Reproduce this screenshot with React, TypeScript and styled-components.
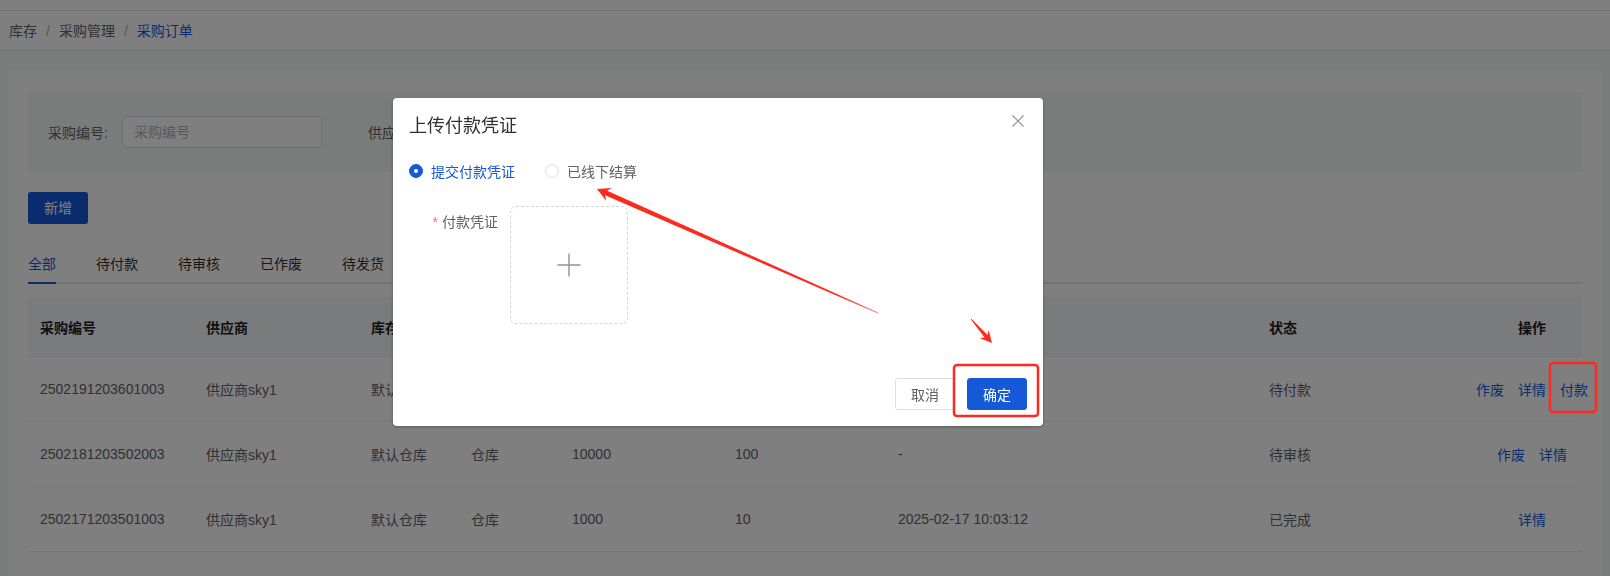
import styled, { createGlobalStyle } from 'styled-components';

const GlobalStyle = createGlobalStyle`
  * {
    box-sizing: border-box;
  }
  html,
  body {
    margin: 0;
    padding: 0;
    overflow: hidden;
  }
  body {
    font-family: 'Liberation Sans', 'Noto Sans CJK SC', sans-serif;
    font-size: 14px;
    color: #606266;
    background: #f5f6f7;
  }
`;

const BLUE = '#1659d8';

const Page = styled.div`
  width: 1610px;
  height: 576px;
  display: flex;
  flex-direction: column;
`;

const TopStrip = styled.div`
  height: 11px;
  background: #fff;
  border-bottom: 1px solid #e4e7ed;
`;

const Breadcrumb = styled.nav`
  height: 40px;
  padding: 0 9px;
  display: flex;
  align-items: center;
  background: #fff;
  border-bottom: 1px solid #e4e7ed;
  line-height: 20px;
`;

const Crumb = styled.span<{ $current?: boolean }>`
  color: ${(p) => (p.$current ? BLUE : '#606266')};
`;

const Sep = styled.span`
  margin: 0 9px;
  color: #a8abb2;
`;

const Main = styled.main`
  flex: 1;
  padding: 20px 8px 0;
  overflow: hidden;
`;

const Card = styled.section`
  background: #fff;
  padding: 21px 20px 0;
  height: 100%;
`;

const FilterBar = styled.div`
  height: 80px;
  padding: 0 20px;
  display: flex;
  align-items: center;
  gap: 46px;
  background: #f5f6f7;
`;

const Field = styled.label`
  display: flex;
  align-items: center;
  gap: 14px;
  color: #606266;
`;

const Input = styled.input`
  width: 200px;
  height: 32px;
  padding: 0 11px;
  border: 1px solid #dcdfe6;
  border-radius: 4px;
  font: inherit;
  color: #606266;
  outline: none;
  &::placeholder {
    color: #b0b3ba;
  }
`;

const PrimaryButton = styled.button`
  height: 32px;
  padding: 0 16px;
  border: none;
  border-radius: 3px;
  background: ${BLUE};
  color: #fff;
  font: inherit;
  line-height: 32px;
`;

const Toolbar = styled.div`
  margin-top: 20px;
`;

const Tabs = styled.div`
  margin-top: 20px;
  display: flex;
  gap: 40px;
  border-bottom: 2px solid #e4e7ed;
`;

const Tab = styled.div<{ $active?: boolean }>`
  height: 40px;
  padding-top: 2px;
  line-height: 36px;
  margin-bottom: -2px;
  border-bottom: 2px solid ${(p) => (p.$active ? BLUE : 'transparent')};
  color: ${(p) => (p.$active ? BLUE : '#303133')};
`;

const Table = styled.div`
  margin-top: 13px;
`;

const COLS = '166px 165px 100px 101px 163px 163px 371px 225px 100px';

const HeadRow = styled.div`
  display: grid;
  grid-template-columns: ${COLS};
  height: 60px;
  align-items: center;
  background: #f5f6f8;
  border-bottom: 1px solid #ebeef5;
`;

const HeadCell = styled.div<{ $center?: boolean }>`
  padding: 0 12px;
  font-weight: 700;
  color: #1d1f24;
  text-align: ${(p) => (p.$center ? 'center' : 'left')};
`;

const Row = styled.div`
  display: grid;
  grid-template-columns: ${COLS};
  height: 65px;
  align-items: center;
  border-bottom: 1px solid #ebeef5;
`;

const Cell = styled.div`
  padding: 0 12px;
  color: #606266;
  white-space: nowrap;
`;

const Actions = styled.div`
  display: flex;
  justify-content: center;
  gap: 14px;
  white-space: nowrap;
`;

const LinkButton = styled.span`
  flex-shrink: 0;
  color: ${BLUE};
`;

/* dialog */

const Mask = styled.div`
  position: fixed;
  inset: 0;
  background: rgba(0, 0, 0, 0.5);
  padding: 98px 0 0 393px;
`;

const Dialog = styled.div`
  width: 650px;
  background: #fff;
  border-radius: 4px;
  box-shadow: 0 1px 3px rgba(0, 0, 0, 0.3);
`;

const DialogHeader = styled.header`
  padding: 16px 16px 0;
  display: flex;
  justify-content: space-between;
  align-items: flex-start;
`;

const DialogTitle = styled.h3`
  margin: 0;
  font-size: 18px;
  font-weight: 400;
  line-height: 24px;
  color: #303133;
`;

const CloseButton = styled.span`
  display: flex;
  margin: 1px 3px 0 0;
`;

const DialogBody = styled.div`
  padding: 23px 16px 0;
`;

const RadioGroup = styled.div`
  display: flex;
  height: 20px;
  align-items: center;
  gap: 30px;
`;

const Radio = styled.label<{ $checked?: boolean }>`
  display: flex;
  align-items: center;
  gap: 8px;
  color: ${(p) => (p.$checked ? BLUE : '#606266')};
`;

const RadioDot = styled.span<{ $checked?: boolean }>`
  width: 14px;
  height: 14px;
  border-radius: 50%;
  border: 1px solid ${(p) => (p.$checked ? BLUE : '#dcdfe6')};
  background: ${(p) => (p.$checked ? BLUE : '#fff')};
  display: flex;
  align-items: center;
  justify-content: center;
  &::after {
    content: '';
    width: 4px;
    height: 4px;
    border-radius: 50%;
    background: #fff;
    display: ${(p) => (p.$checked ? 'block' : 'none')};
  }
`;

const FormItem = styled.div`
  margin-top: 25px;
  display: flex;
  align-items: flex-start;
`;

const FormLabel = styled.div`
  width: 101px;
  padding-right: 12px;
  text-align: right;
  line-height: 32px;
  color: #606266;
`;

const Required = styled.span`
  color: #f56c6c;
  margin-right: 4px;
`;

const Uploader = styled.div`
  width: 118px;
  height: 118px;
  border: 1px dashed #d4d7dd;
  border-radius: 6px;
  display: flex;
  align-items: center;
  justify-content: center;
`;

const DialogFooter = styled.footer`
  padding: 54px 16px 16px;
  display: flex;
  justify-content: flex-end;
  gap: 12px;
`;

const Button = styled.button<{ $primary?: boolean }>`
  height: 32px;
  padding: 0 15px;
  border-radius: 3px;
  font: inherit;
  border: 1px solid ${(p) => (p.$primary ? BLUE : '#dcdfe6')};
  background: ${(p) => (p.$primary ? BLUE : '#fff')};
  color: ${(p) => (p.$primary ? '#fff' : '#606266')};
`;

const Marks = styled.svg`
  position: fixed;
  top: 0;
  left: 0;
  pointer-events: none;
`;

const orders = [
  {
    no: '2502191203601003',
    supplier: '供应商sky1',
    store: '默认仓库',
    kind: '仓库',
    amount: '5000',
    qty: '50',
    paidAt: '-',
    status: '待付款',
    actions: ['作废', '详情', '付款'],
  },
  {
    no: '2502181203502003',
    supplier: '供应商sky1',
    store: '默认仓库',
    kind: '仓库',
    amount: '10000',
    qty: '100',
    paidAt: '-',
    status: '待审核',
    actions: ['作废', '详情'],
  },
  {
    no: '2502171203501003',
    supplier: '供应商sky1',
    store: '默认仓库',
    kind: '仓库',
    amount: '1000',
    qty: '10',
    paidAt: '2025-02-17 10:03:12',
    status: '已完成',
    actions: ['详情'],
  },
];

const tabs = ['全部', '待付款', '待审核', '已作废', '待发货'];

function App() {
  return (
    <Page>
      <GlobalStyle />
      <TopStrip />
      <Breadcrumb>
        <Crumb>库存</Crumb>
        <Sep>/</Sep>
        <Crumb>采购管理</Crumb>
        <Sep>/</Sep>
        <Crumb $current>采购订单</Crumb>
      </Breadcrumb>
      <Main>
        <Card>
          <FilterBar>
            <Field>
              采购编号:
              <Input placeholder="采购编号" />
            </Field>
            <Field>
              供应商:
              <Input placeholder="供应商" />
            </Field>
            <PrimaryButton>查询</PrimaryButton>
          </FilterBar>
          <Toolbar>
            <PrimaryButton>新增</PrimaryButton>
          </Toolbar>
          <Tabs>
            {tabs.map((t, i) => (
              <Tab key={t} $active={i === 0}>
                {t}
              </Tab>
            ))}
          </Tabs>
          <Table>
            <HeadRow>
              <HeadCell>采购编号</HeadCell>
              <HeadCell>供应商</HeadCell>
              <HeadCell>库存地点</HeadCell>
              <HeadCell>库存类型</HeadCell>
              <HeadCell>采购金额</HeadCell>
              <HeadCell>采购数量</HeadCell>
              <HeadCell>付款时间</HeadCell>
              <HeadCell>状态</HeadCell>
              <HeadCell $center>操作</HeadCell>
            </HeadRow>
            {orders.map((o) => (
              <Row key={o.no}>
                <Cell>{o.no}</Cell>
                <Cell>{o.supplier}</Cell>
                <Cell>{o.store}</Cell>
                <Cell>{o.kind}</Cell>
                <Cell>{o.amount}</Cell>
                <Cell>{o.qty}</Cell>
                <Cell>{o.paidAt}</Cell>
                <Cell>{o.status}</Cell>
                <Actions>
                  {o.actions.map((a) => (
                    <LinkButton key={a}>{a}</LinkButton>
                  ))}
                </Actions>
              </Row>
            ))}
          </Table>
        </Card>
      </Main>

      <Mask>
        <Dialog>
          <DialogHeader>
            <DialogTitle>上传付款凭证</DialogTitle>
            <CloseButton>
              <svg width="12" height="12" viewBox="0 0 12 12">
                <path d="M0.5 0.5L11.5 11.5M11.5 0.5L0.5 11.5" stroke="#909399" strokeWidth="1.2" />
              </svg>
            </CloseButton>
          </DialogHeader>
          <DialogBody>
            <RadioGroup>
              <Radio $checked>
                <RadioDot $checked />
                提交付款凭证
              </Radio>
              <Radio>
                <RadioDot />
                已线下结算
              </Radio>
            </RadioGroup>
            <FormItem>
              <FormLabel>
                <Required>*</Required>付款凭证
              </FormLabel>
              <Uploader>
                <svg width="24" height="24" viewBox="0 0 24 24">
                  <path d="M12 0.5V23.5M0.5 12H23.5" stroke="#8c939d" strokeWidth="1.4" />
                </svg>
              </Uploader>
            </FormItem>
          </DialogBody>
          <DialogFooter>
            <Button>取消</Button>
            <Button $primary>确定</Button>
          </DialogFooter>
        </Dialog>
      </Mask>

      {/* red review marks drawn over the page */}
      <Marks width="1610" height="576" viewBox="0 0 1610 576">
        <defs>
          <linearGradient id="tailFade" x1="597" y1="189" x2="878" y2="313" gradientUnits="userSpaceOnUse">
            <stop offset="0" stopColor="#ff2a1f" />
            <stop offset="0.85" stopColor="#ff2a1f" />
            <stop offset="1" stopColor="#ff8a84" />
          </linearGradient>
        </defs>
        <polygon
          points="597,189 606.1,200.7 605.1,195.3 877.8,313.4 878.2,312.6 607.2,190.7 611.7,187.9"
          fill="url(#tailFade)"
        />
        <polygon
          points="992,343 988.6,330.1 987.6,334.9 971.3,318.7 970.7,319.3 984.6,337.5 979.6,338"
          fill="#ff2a1f"
        />
        <rect x="954" y="365" width="84" height="51" rx="3" fill="none" stroke="#ff2a1f" strokeWidth="2.5" />
        <rect x="1550" y="363" width="46" height="49" rx="3" fill="none" stroke="#ff2a1f" strokeWidth="2.5" />
      </Marks>
    </Page>
  );
}

export default App;
